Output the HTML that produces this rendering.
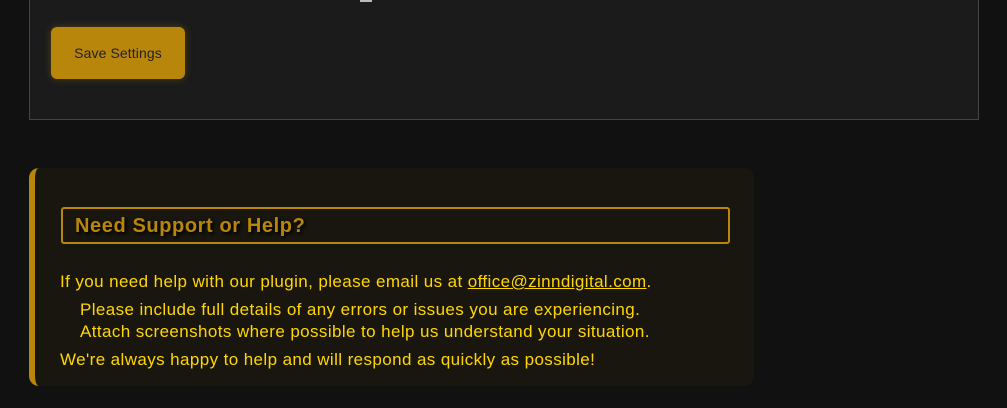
<!DOCTYPE html>
<html><head><style>
body{margin:0;width:1007px;height:408px;background:#111;font-family:"Liberation Sans",sans-serif;position:relative;overflow:hidden}
.panel{position:absolute;left:29px;top:-10px;width:948px;height:128px;background:#1b1b1b;border:1px solid #444}
.btn{position:absolute;left:51px;top:27px;width:134px;height:52px;background:#b8860b;border-radius:6px;box-shadow:0 0 8px rgba(184,134,11,.35);font-size:14px;color:#222;display:flex;align-items:center;justify-content:center;letter-spacing:0.1px}
.mark{position:absolute;left:360px;top:0;width:12px;height:2px;background:#bbb}
.sup{position:absolute;left:29px;top:168px;width:725px;height:218px;background:#18160f;border-left:6px solid #b8860b;border-radius:10px;box-sizing:border-box}
.h{position:absolute;left:26px;top:39px;width:669px;height:37px;border:2px solid #b8860b;border-radius:3px;box-sizing:border-box;color:#b8860b;font-weight:bold;font-size:20px;line-height:35px;padding-left:12px;letter-spacing:0.6px;text-shadow:2px 2px 3px #000}
.t{position:absolute;left:25px;color:#ffd700;font-size:17px;white-space:nowrap;letter-spacing:0.4px}
.t a{color:#ffd700;text-decoration:underline}
</style></head><body>
<div class="panel"></div>
<div class="mark"></div>
<div class="btn">Save Settings</div>
<div class="sup">
<div class="h">Need Support or Help?</div>
<div class="t" style="top:104px">If you need help with our plugin, please email us at <a>office@zinndigital.com</a>.</div>
<div class="t" style="top:132px;left:45px">Please include full details of any errors or issues you are experiencing.</div>
<div class="t" style="top:154px;left:45px">Attach screenshots where possible to help us understand your situation.</div>
<div class="t" style="top:182px">We're always happy to help and will respond as quickly as possible!</div>
</div>
</body></html>
